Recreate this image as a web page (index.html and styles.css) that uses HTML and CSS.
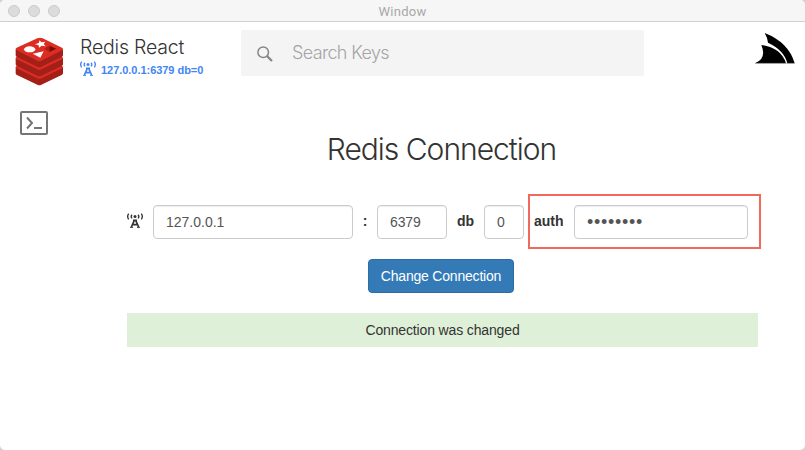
FILE: index.html
```
<!DOCTYPE html>
<html lang="en">
<head>
<meta charset="utf-8">
<title>Redis React</title>
<link rel="stylesheet" href="styles.css">
</head>
<body>
<svg width="0" height="0" class="defs">
  <symbol id="antenna" viewBox="0 0 48 45">
    <g fill="none" stroke="currentColor" stroke-width="4">
      <path d="M5 2Q-1 10 5 19M43 2Q49 10 43 19M15 5Q10 10 15 16M33 5Q38 10 33 16"/>
      <path d="M22 22L13 42M26 22L35 42M16 35H32M18 22H30" stroke-width="5"/>
      <path d="M9 43H18M30 43H39" stroke-width="3"/>
    </g>
    <circle cx="24" cy="10.500" r="4.500" fill="currentColor"/>
  </symbol>
</svg>
<div class="window">
  <div class="titlebar">
    <div class="lights"><i></i><i></i><i></i></div>
    <span>Window</span>
  </div>
  <header class="header">
    <svg class="redis" viewBox="0 0 147 147">
      <g>
        <path fill="#a32018" d="M2 91V109Q2 112 6 114L67 143Q73 147 79 143L140 114Q144 112 144 109V91Z"/>
        <path fill="#dc2c23" d="M5 86L67 58Q73 55 79 58L141 86Q147 90 141 94L79 124Q73 127 67 124L5 94Q-1 90 5 86Z"/>
        <path fill="#a32018" d="M2 64V82Q2 85 6 87L67 116Q73 120 79 116L140 87Q144 85 144 82V64Z"/>
        <path fill="#dc2c23" d="M5 59L67 31Q73 28 79 31L141 59Q147 63 141 67L79 97Q73 100 67 97L5 67Q-1 63 5 59Z"/>
        <path fill="#a32018" d="M2 37V55Q2 58 6 60L67 89Q73 93 79 89L140 60Q144 58 144 55V37Z"/>
        <path fill="#dc2c23" d="M5 32L67 4Q75 0 83 4L141 32Q147 36 141 40L79 71Q73 74 67 71L5 40Q-1 36 5 32Z"/>
      </g>
      <ellipse cx="44" cy="37" rx="17" ry="9" fill="#fff"/>
      <path fill="#fff" d="M74 10L79 16L91 14L86 21L92 28L80 26L72 32L71 25L60 22L71 18ZM53 50L86 43L76 62Z"/>
      <path fill="#7a0c00" d="M103 26L124 35L103 45Z"/>
      <path fill="#ad2115" d="M103 26V45L88 35Z"/>
    </svg>
    <div class="brand">
      <div class="name">Redis React</div>
      <div class="server"><svg><use href="#antenna"/></svg><b>127.0.0.1:6379 db=0</b></div>
    </div>
    <div class="search">
      <svg viewBox="0 0 16 16" fill="none" stroke="#858585"><circle cx="6.200" cy="6.200" r="5.300" stroke-width="1.500"/><path d="M10 10L15 15" stroke-width="2.200"/></svg>
      <span>Search Keys</span>
    </div>
    <svg class="stack" viewBox="0 0 120 93">
      <path d="M29 0Q101 28 119 91H97Q88 52 39 29Q37 13 29 0Z"/>
      <path d="M19 36Q78 44 93 91H0Q36 77 19 36Z"/>
      <path d="M0 91H119" stroke="#777" stroke-width="1.500"/>
    </svg>
  </header>
  <div class="body">
    <nav class="side">
      <svg viewBox="0 0 28 24" fill="none" stroke="#757575"><rect x="1" y="1" width="26" height="22" rx="1" stroke-width="2"/><path d="M7 6.500L12 12L7 17.500M14 17H22" stroke-width="2"/></svg>
    </nav>
    <main class="main">
      <h1>Redis Connection</h1>
      <form class="form">
        <svg class="host-icon"><use href="#antenna"/></svg>
        <div class="field host">127.0.0.1</div>
        <b class="colon">:</b>
        <div class="field port">6379</div>
        <b class="db-label">db</b>
        <div class="field db">0</div>
        <div class="auth">
          <b>auth</b>
          <div class="field password">••••••••</div>
        </div>
      </form>
      <div class="button">Change Connection</div>
      <div class="message">Connection was changed</div>
    </main>
  </div>
</div>
</body>
</html>
```
FILE: styles.css
```
* { box-sizing: border-box; }
body {
  margin: 0;
  background: #d0d0d0;
  font: 14px/20px "Liberation Sans", Arial, sans-serif;
  color: #333;
}
.defs { display: block; }
svg { display: block; flex: none; }
.window {
  width: 805px;
  height: 450px;
  background: #fff;
  border-radius: 5px;
  overflow: hidden;
}
.titlebar {
  display: grid;
  grid-template-columns: 1fr auto 1fr;
  align-items: center;
  height: 22px;
  background: #f6f6f6;
  border-bottom: 1px solid #d1d1d1;
  color: #a8a8a8;
  font: 13px/21px Roboto, sans-serif;
  letter-spacing: .3px;
}
.titlebar span { padding-top: 1px; }
.lights { display: flex; gap: 8px; padding-left: 8px; }
.lights i {
  width: 12px;
  height: 12px;
  border-radius: 50%;
  background: #dcdcdc;
  border: 1px solid #cacaca;
}
.header {
  display: flex;
  align-items: flex-start;
  height: 78px;
  padding: 8px 10px 0 15px;
}
.redis { width: 49px; height: 49px; margin-top: 7px; }
.brand { width: 161px; margin-left: 16px; padding-top: 5px; }
.name {
  font: 300 19.5px/24px Inter, sans-serif;
  letter-spacing: -.2px;
  white-space: nowrap;
}
.server {
  display: flex;
  align-items: center;
  gap: 5px;
  height: 18px;
  color: #4285f4;
  font-size: 11px;
  letter-spacing: -.04px;
  white-space: nowrap;
}
.server svg { width: 16px; height: 15px; }
.server b { padding-top: 3px; }
.search {
  display: flex;
  align-items: center;
  width: 403px;
  height: 46px;
  padding-left: 16px;
  gap: 19px;
  border-radius: 2px;
  background: #f4f4f4;
  color: #a5a5a5;
  font: 300 18px/46px Inter, sans-serif;
  letter-spacing: -.65px;
}
.search svg { width: 16px; height: 16px; margin-top: 1px; }
.stack { width: 40px; height: 31px; margin-left: auto; margin-top: 3px; }
.body { display: flex; }
.side { flex: none; width: 127px; padding: 11px 0 0 20px; }
.side svg { width: 28px; height: 24px; }
.main { flex: none; width: 631px; padding-top: 31px; }
h1 {
  margin: 0 0 38px;
  padding-right: 2px;
  font: 300 30px/36px Inter, sans-serif;
  letter-spacing: -1px;
  text-align: center;
}
.form { display: flex; align-items: center; height: 34px; margin: 0; }
.form > *, .auth > * { flex: none; }
.form b { padding-bottom: 2px; }
.host-icon { width: 16px; height: 15px; margin: -3px 10px 0 0; }
.field {
  height: 34px;
  padding: 0 12px;
  border: 1px solid #ccc;
  border-radius: 4px;
  box-shadow: inset 0 1px 1px rgba(0, 0, 0, .075);
  color: #555;
  line-height: 33px;
}
.host { width: 200px; }
.colon { width: 24px; text-align: center; }
.port { width: 70px; letter-spacing: -.1px; }
.db-label { width: 37px; text-align: center; }
.db { width: 40px; }
.auth {
  display: flex;
  align-items: center;
  width: 233px;
  height: 55px;
  margin-left: 4px;
  margin-top: -1px;
  padding: 1px 0 0 4px;
  border: 2px solid #f1695b;
}
.auth b { width: 40px; }
.password { width: 174px; font-size: 18px; letter-spacing: .7px; }
.button {
  width: 146px;
  height: 34px;
  margin: 20px 244px 20px 241px;
  border: 1px solid #2e6da4;
  border-radius: 4px;
  background: #337ab7;
  color: #fff;
  line-height: 32px;
  letter-spacing: -.2px;
  text-align: center;
  white-space: nowrap;
}
.message {
  height: 34px;
  background: #dff0d8;
  line-height: 34px;
  letter-spacing: -.14px;
  text-align: center;
}
```
